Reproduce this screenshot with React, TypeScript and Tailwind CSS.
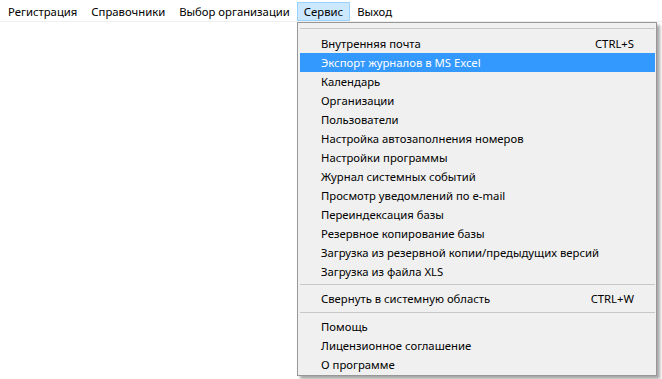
import React from "react";

type Item = { label: string; shortcut?: string; active?: boolean };

const group1: Item[] = [
  { label: "Внутренняя почта", shortcut: "CTRL+S" },
  { label: "Экспорт журналов в MS Excel", active: true },
  { label: "Календарь" },
  { label: "Организации" },
  { label: "Пользователи" },
  { label: "Настройка автозаполнения номеров" },
  { label: "Настройки программы" },
  { label: "Журнал системных событий" },
  { label: "Просмотр уведомлений по e-mail" },
  { label: "Переиндексация базы" },
  { label: "Резервное копирование базы" },
  { label: "Загрузка из резервной копии/предыдущих версий" },
  { label: "Загрузка из файла XLS" },
];
const group2: Item[] = [{ label: "Свернуть в системную область", shortcut: "CTRL+W" }];
const group3: Item[] = [
  { label: "Помощь" },
  { label: "Лицензионное соглашение" },
  { label: "О программе" },
];

function Row({ item }: { item: Item }) {
  return (
    <div
      className={
        "flex h-[19px] items-center justify-between pl-[21px] pr-[21px] " +
        (item.active ? "bg-[#3399ff] text-white" : "text-black")
      }
    >
      <span>{item.label}</span>
      {item.shortcut && <span>{item.shortcut}</span>}
    </div>
  );
}

export default function App() {
  const bar = ["Регистрация", "Справочники", "Выбор организации", "Сервис", "Выход"];
  return (
    <div
      className="relative h-[379px] w-[662px] overflow-hidden bg-white text-[11.3px] leading-none text-black"
      style={{ fontFamily: '"Noto Sans", "Liberation Sans", sans-serif' }}
    >
      <div className="flex h-[22px] items-start border-b border-[#f0f0f0] pl-[1px] pt-[2px]">
        {bar.map((b) => (
          <div
            key={b}
            className={
              "flex h-[19px] items-center px-[6px] border " +
              (b === "Сервис" ? "border-[#99d1ff] bg-[#cce8ff]" : "border-transparent")
            }
          >
            {b}
          </div>
        ))}
      </div>

      <div className="absolute left-[297px] top-[22px] h-[354px] w-[360px] border border-[#979797] bg-[#f0f0f0] shadow-[3px_3px_3px_rgba(0,0,0,0.35)]">
        <div className="pl-[2px] pr-[1px] pt-[5px]">
          <div className="h-px bg-[#c8c8c8]" />
          <div className="h-[5px]" />
          {group1.map((i) => (
            <Row key={i.label} item={i} />
          ))}
          <div className="h-[8px] pt-[3px]">
            <div className="h-px bg-[#c8c8c8]" />
          </div>
          {group2.map((i) => (
            <Row key={i.label} item={i} />
          ))}
          <div className="h-[9px] pt-[4px]">
            <div className="h-px bg-[#c8c8c8]" />
          </div>
          {group3.map((i) => (
            <Row key={i.label} item={i} />
          ))}
        </div>
      </div>
    </div>
  );
}
